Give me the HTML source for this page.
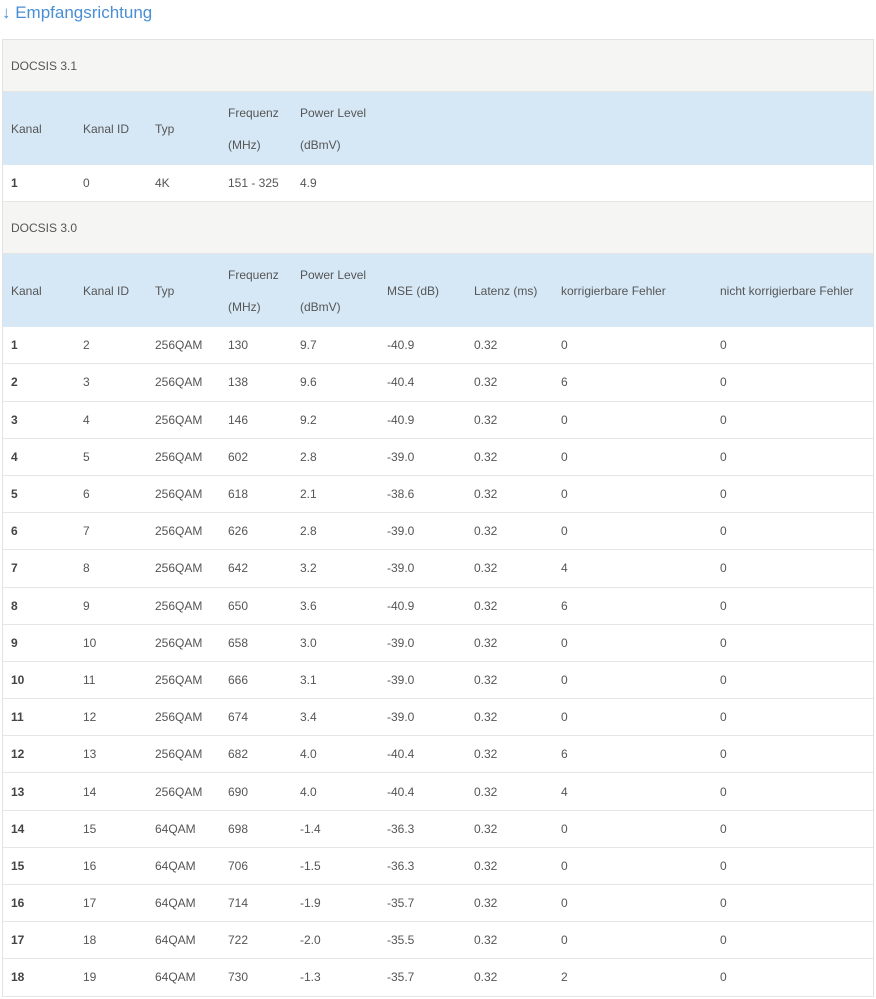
<!DOCTYPE html>
<html><head><meta charset="utf-8"><style>
body{margin:0;width:876px;height:999px;overflow:hidden;background:#fff;font-family:"Liberation Sans",sans-serif;font-size:12px;color:#555;position:relative}
.t{position:absolute;left:2px;top:3px;font-size:17px;color:#4a8fd6}
.tbl{position:absolute;left:2px;top:39px;width:870px;border-left:1px solid #e2e2e2;border-right:1px solid #e2e2e2;border-top:1px solid #e2e2e2}
.sec{height:51px;background:#f5f5f4;border-bottom:1px solid #e4e4e4;position:relative}
.sec span{position:absolute;left:8px;top:19px}
.hd{height:73px;background:#d6e8f6;position:relative}
.r{height:36.2px;border-bottom:1px solid #e6e6e6;position:relative}
.r span,.hd span{position:absolute;top:50%;transform:translateY(-50%);white-space:nowrap}
.hd span.two{line-height:32px}
b{font-weight:bold;color:#444}
</style></head><body>
<div class="t">↓ Empfangsrichtung</div>
<div class="tbl">
<div class="sec"><span>DOCSIS 3.1</span></div>
<div class="hd"><span style="left:8px">Kanal</span><span style="left:80px">Kanal ID</span><span style="left:152px">Typ</span><span class="two" style="left:225px">Frequenz<br>(MHz)</span><span class="two" style="left:297px">Power Level<br>(dBmV)</span></div>
<div class="r"><span style="left:8px"><b>1</b></span><span style="left:80px">0</span><span style="left:152px">4K</span><span style="left:225px">151 - 325</span><span style="left:297px">4.9</span></div>
<div class="sec"><span>DOCSIS 3.0</span></div>
<div class="hd"><span style="left:8px">Kanal</span><span style="left:80px">Kanal ID</span><span style="left:152px">Typ</span><span class="two" style="left:225px">Frequenz<br>(MHz)</span><span class="two" style="left:297px">Power Level<br>(dBmV)</span><span style="left:384px">MSE (dB)</span><span style="left:471px">Latenz (ms)</span><span style="left:558px">korrigierbare Fehler</span><span style="left:717px">nicht korrigierbare Fehler</span></div>
<div id="rows"></div>
</div>
<script>
var d=[[1,2,"256QAM",130,"9.7","-40.9",0],[2,3,"256QAM",138,"9.6","-40.4",6],[3,4,"256QAM",146,"9.2","-40.9",0],[4,5,"256QAM",602,"2.8","-39.0",0],[5,6,"256QAM",618,"2.1","-38.6",0],[6,7,"256QAM",626,"2.8","-39.0",0],[7,8,"256QAM",642,"3.2","-39.0",4],[8,9,"256QAM",650,"3.6","-40.9",6],[9,10,"256QAM",658,"3.0","-39.0",0],[10,11,"256QAM",666,"3.1","-39.0",0],[11,12,"256QAM",674,"3.4","-39.0",0],[12,13,"256QAM",682,"4.0","-40.4",6],[13,14,"256QAM",690,"4.0","-40.4",4],[14,15,"64QAM",698,"-1.4","-36.3",0],[15,16,"64QAM",706,"-1.5","-36.3",0],[16,17,"64QAM",714,"-1.9","-35.7",0],[17,18,"64QAM",722,"-2.0","-35.5",0],[18,19,"64QAM",730,"-1.3","-35.7",2]];
var h="",L=[8,80,152,225,297,384,471,558,717];
d.forEach(function(r){var v=[ "<b>"+r[0]+"</b>",r[1],r[2],r[3],r[4],r[5],"0.32",r[6],0];h+='<div class="r">';v.forEach(function(x,i){h+='<span style="left:'+L[i]+'px">'+x+'</span>'});h+='</div>'});
document.getElementById("rows").innerHTML=h;
</script>
</body></html>
